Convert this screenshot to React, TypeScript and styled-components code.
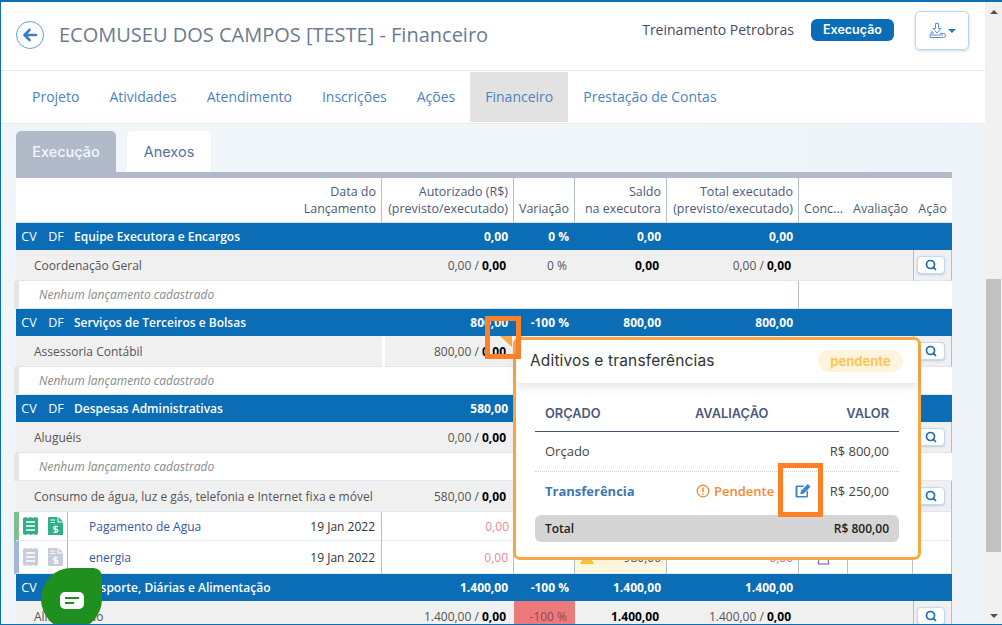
import React from "react";
import styled, { createGlobalStyle } from "styled-components";
import { Search } from "lucide-react";

const Global = createGlobalStyle`
  html, body { margin: 0; padding: 0; background: #fff; }
  body { font-family: "Open Sans", "Liberation Sans", sans-serif; overflow: hidden; }
  * { box-sizing: border-box; }
`;

const Window = styled.div`
  position: relative; width: 1002px; height: 625px; display: flex; overflow: hidden;
  border: 1px solid #0b6fb6; border-top-width: 2px; border-right-width: 0; background: #fff;
`;
const Page = styled.div`flex: 1; min-width: 0; display: flex; flex-direction: column;`;
const Header = styled.header`
  height: 69px; flex: none; display: flex; align-items: flex-start; border-bottom: 1px solid #e3edf3; padding-left: 15px;
`;
const BackButton = styled.div`
  width: 28px; height: 28px; margin-top: 19px; border: 1px solid #5fa2de; border-radius: 50%;
  display: flex; align-items: center; justify-content: center;
`;
const Title = styled.h1`
  margin: 18px 0 0 15px; font-size: 20px; line-height: 29px; font-weight: 400; color: #6c7b90; white-space: nowrap;
`;
const Spacer = styled.div`flex: 1;`;
const ProjectName = styled.span`
  margin-top: 18px; font-size: 14px; line-height: 20px; color: #474b68; white-space: nowrap;
`;
const StatusBadge = styled.span`
  margin: 17px 0 0 17px; width: 83px; height: 22px; border-radius: 6px; background: #0a6db5; color: #fff;
  font: 600 12.5px/22px Inter, "Open Sans", sans-serif; text-align: center;
`;
const ExportButton = styled.div`
  margin: 9px 16px 0 21px; width: 54px; height: 39px; border: 1px solid #b9d5ea; border-radius: 5px;
  box-shadow: 0 1px 3px rgba(90,130,170,.35); display: flex; align-items: center; justify-content: center; gap: 2px;
`;
const Caret = styled.span`
  width: 0; height: 0; border-left: 4px solid transparent; border-right: 4px solid transparent; border-top: 4px solid #2b7bc0; margin-top: 1px;
`;
const Nav = styled.nav`
  height: 53px; flex: none; display: flex; padding: 1px 0 0 16px; border-bottom: 1px solid #e6edf2;
`;
const NavItem = styled.a<{ $active?: boolean }>`
  padding: 0 15px; height: 50px; line-height: 50px; font-size: 14px; color: #4c82bf; white-space: nowrap;
  background: ${p => (p.$active ? "#e2e2e2" : "transparent")};
`;
const Content = styled.main`
  flex: 1; min-height: 0; overflow: hidden; padding: 7px 33px 0 15px; background: linear-gradient(90deg, #f0f5f9, #f1f6fa 60%, #edf3f8);
`;
const Tabs = styled.div`display: flex; gap: 11px; height: 41px;`;
const Tab = styled.div<{ $active?: boolean; $w: number }>`
  width: ${p => p.$w}px; border-radius: 5px 5px 0 0; text-align: center;
  font: ${p => (p.$active ? 500 : 400)} 14.5px/41px Inter, "Open Sans", sans-serif;
  background: ${p => (p.$active ? "#b0bac9" : "#fff")}; color: ${p => (p.$active ? "#f4f6f9" : "#56709f")};
`;
const TabBar = styled.div`height: 6px; background: #b0bac9;`;
const Table = styled.table`
  width: 936px; table-layout: fixed; border-collapse: separate; border-spacing: 0; font-size: 12px; background: #fff;
`;
const Th = styled.th<{ $line?: boolean }>`
  height: 45px; padding: 0 5px 5px 0; vertical-align: bottom; text-align: right; font-weight: 400; font-size: 12.5px; line-height: 17px;
  color: #4d5a78; white-space: nowrap; border-bottom: 1px solid #dfe4ea;
  border-right: ${p => (p.$line ? "1px solid #b5bdc9" : "0")};
`;
const ConcTh = styled(Th)`text-align: center; padding: 0 0 5px;`;
const GroupRow = styled.tr`
  height: 27px; background: #0a6db5; color: #fff; font-weight: 700;
`;
const GroupCell = styled.td`
  padding: 0 6px 0 0; text-align: right; white-space: nowrap; overflow: hidden;
`;
const GroupName = styled(GroupCell)`padding-left: 6px; text-align: left; font-weight: 600;`;
const CodeCell = styled.td<{ $nudge?: boolean }>`
  padding: 0 0 0 ${p => (p.$nudge ? "2px" : "0")}; text-align: center; font-weight: 400; font-size: 12.5px;
`;
const SubRow = styled.tr`height: 31px; background: #f0f0f0;`;
const SubCell = styled.td<{ $left?: boolean; $flag?: boolean; $danger?: boolean; $line?: boolean }>`
  position: relative; padding: ${p => (p.$left ? "0 0 0 18px" : "0 8px 0 0")}; text-align: ${p => (p.$left ? "left" : "right")};
  color: ${p => (p.$danger ? "#8f4b4b" : "#555")}; white-space: nowrap; border-bottom: 1px solid #dfe5ef;
  background: ${p => (p.$danger ? "#ec7a7a" : "transparent")};
  border-right: ${p => (p.$line ? "1px solid #b5bdc9" : "0")};
  border-left: ${p => (p.$flag ? "3px solid #fff" : "0")};
  ${p => p.$flag && `&::after { content: ""; position: absolute; top: 0; right: 2px; border-style: solid; border-width: 0 12px 11px 0; border-color: transparent #f9a742 transparent transparent; }`}
`;
const ActionCell = styled(SubCell)`padding: 0 0 0 3px; text-align: left; border-left: 1px solid #b5bdc9; border-right: 1px solid #b5bdc9;`;
const Strong = styled.b`color: #000; font-weight: 700;`;
const SearchButton = styled.span`
  width: 28px; height: 18px; background: #fff; border: 1px solid #bcdcf0; border-radius: 4px; box-shadow: 0 1px 2px rgba(80,120,170,.3);
  display: inline-flex; align-items: center; justify-content: center; color: #186cb2; vertical-align: middle;
`;
const EmptyRow = styled.tr`height: 28px;`;
const EmptyCell = styled.td`
  padding: 0 0 1px 23px; font-style: italic; color: #8a8a8a; white-space: nowrap; border-bottom: 1px solid #e4e8f0;
  box-shadow: -2px 0 0 #e5e5e5, inset 3px 0 0 #e5e5e5;
`;
const PlainCell = styled.td<{ $line?: boolean }>`
  padding: 0 5px; border-bottom: 1px solid #e4e8f0; text-align: right; white-space: nowrap;
  border-right: ${p => (p.$line ? "1px solid #b5bdc9" : "0")};
`;
const MarkCell = styled(PlainCell)`padding: 0; text-align: center; line-height: 0;`;
const DocRow = styled.tr<{ $h: number }>`height: ${p => p.$h}px;`;
const IconCell = styled.td<{ $stripe?: string; $line?: boolean }>`
  padding: 0 0 0 2px; text-align: center; line-height: 0; border-bottom: 1px solid #e4e8f0;
  border-right: ${p => (p.$line ? "1px solid #b5bdc9" : "0")};
  box-shadow: ${p => (p.$stripe ? `-2px 0 0 ${p.$stripe}, inset 3px 0 0 ${p.$stripe}` : "none")};
`;
const DocName = styled(PlainCell)`padding-left: 21px; text-align: left; color: #35589f;`;
const DocDate = styled(PlainCell)`padding-right: 6px; color: #333;`;
const PinkValue = styled(PlainCell)`color: #ee8a8f;`;
const YellowCell = styled(PlainCell)`background: #fdf6df; color: #555;`;
const YellowInner = styled.span`display: flex; align-items: center; justify-content: space-between;`;
const RedSmall = styled(PlainCell)`color: #e86a70;`;

const ScrollTrack = styled.aside`
  width: 17px; flex: none; background: #f1f1f1; display: flex; flex-direction: column; align-items: center; justify-content: space-between; padding: 8px 0 6px;
`;
const ArrowUp = styled.span`width:0;height:0;border-left:4px solid transparent;border-right:4px solid transparent;border-bottom:4px solid #505050;`;
const ArrowDown = styled.span`width:0;height:0;border-left:4px solid transparent;border-right:4px solid transparent;border-top:4px solid #505050;`;
const ScrollThumb = styled.span`
  position: absolute; top: 277px; right: 1px; width: 15px; height: 273px; background: #c1c1c1;
`;

const Popover = styled.section`
  position: absolute; left: 512px; top: 335px; width: 408px; height: 223px; background: #fff;
  border: 3px solid #f9a742; border-radius: 7px; font-size: 13px; color: #444;
`;
const PopHead = styled.div`
  height: 43px; display: flex; align-items: center; justify-content: space-between; padding: 0 15px 2px 14px;
  box-shadow: 0 4px 8px rgba(60,60,60,.13);
`;
const PopTitle = styled.h2`margin: 0; font: 400 15.5px/20px Inter, "Open Sans", sans-serif; letter-spacing: .15px; color: #333;`;
const PendingPill = styled.span`
  width: 85px; height: 22px; border-radius: 11px; background: #fdf4dd; color: #fcc659; text-align: center;
  font: 700 13px/22px Inter, "Open Sans", sans-serif;
`;
const PopBody = styled.div`padding: 18px 19px 0 19px;`;
const PopRowHead = styled.div`
  height: 31px; display: grid; grid-template-columns: 150px 1fr auto; align-items: start; border-bottom: 1px solid #3f5378;
  font: 600 12.8px/26px Inter, "Open Sans", sans-serif; color: #4c5a7b; padding: 0 10px;
`;
const PopRow = styled.div<{ $dotted?: boolean }>`
  height: 40px; display: grid; grid-template-columns: 151px 1fr auto; align-items: center; padding: 0 10px 2px;
  border-bottom: ${p => (p.$dotted ? "1px dotted #ccd" : "0")}; color: #444;
`;
const Transfer = styled.b`color: #3c78b4; font-weight: 700;`;
const Pending = styled.span`
  color: #f58a30; font-weight: 600; display: flex; align-items: center; gap: 4px;
`;
const EditSlot = styled.span`display: inline-flex; margin-left: 21px;`;
const Eval = styled.div`display: flex; align-items: center;`;
const TotalBar = styled.div`
  height: 27px; margin-top: 3px; background: #d5d5d5; border-radius: 6px; display: flex; align-items: center; justify-content: space-between;
  padding: 0 10px; font-size: 12px; color: #222; font-weight: 600;
`;
const Highlight = styled.div<{ $x: number; $y: number; $w: number; $h: number }>`
  position: absolute; left: ${p => p.$x}px; top: ${p => p.$y}px; width: ${p => p.$w}px; height: ${p => p.$h}px;
  border: 5px solid #fd7f26; pointer-events: none;
`;
const ChatBubble = styled.div`
  position: absolute; left: 40px; top: 566px; width: 61px; height: 62px; background: #1f8f1f;
  border-radius: 50% 14% 50% 50%; display: flex; align-items: center; justify-content: center; padding-top: 3px;
`;

const Arrow = () => (
  <svg width="16" height="14" viewBox="0 0 16 14" fill="none" stroke="#3a7fc4" strokeWidth="2.6" strokeLinecap="round" strokeLinejoin="round">
    <path d="M14 7H3M7.5 2 2.5 7l5 5" />
  </svg>
);
const ExportIcon = () => (
  <svg width="17" height="17" viewBox="0 0 17 17" fill="none" stroke="#5b93cc" strokeWidth="1" strokeLinejoin="round">
    <path d="M6.5 1.5h3v5h2.5L8 11 4 6.5h2.5z" />
    <path d="M3.5 9 1 13v2.500h13.500a1.500 1.500 0 0 0 0-4H11M5 11H3" />
    <path d="M1 13h13" />
  </svg>
);
const Receipt = ({ color }: { color: string }) => (
  <svg width="15" height="18" viewBox="0 0 15 18">
    <path d="M0 1l2.500-1 2.500 1 2.500-1 2.500 1 2.500-1L15 1v16l-2.500 1-2.500-1-2.500 1-2.500-1-2.500 1L0 17z" fill={color} />
    <path d="M3 5h9M3 9h9M3 13h9" stroke="#fff" strokeWidth="1.500" />
  </svg>
);
const FileDollar = ({ color }: { color: string }) => (
  <svg width="15" height="18" viewBox="0 0 15 18">
    <path d="M0 0h9.500v5.500H15V18H0z" fill={color} />
    <path d="M10.500 0 15 4.500h-4.500z" fill={color} />
    <path d="M2.500 3h4.500M2.500 5.500h4.500" stroke="#fff" strokeWidth="1" />
    <path d="M10 9.500H7a1.200 1.200 0 0 0 0 2.800h1.500a1.200 1.200 0 0 1 0 2.800H5.500M7.700 8.500v7.500" stroke="#fff" strokeWidth="1.200" fill="none" />
  </svg>
);
const Warn = () => (
  <svg width="14" height="14" viewBox="0 0 14 14" fill="none" stroke="#f58a30" strokeWidth="1.300">
    <circle cx="7" cy="7" r="5.800" />
    <path d="M7 3.500v4.500M7 9.500v1.300" strokeWidth="1.600" />
  </svg>
);
const Edit = () => (
  <svg width="16" height="14" viewBox="0 0 16 14">
    <path d="M1.800 1.500h7.700L8 3H2.500v9h9V7.500L13 6v6.200a1.300 1.300 0 0 1-1.300 1.300H1.800A1.300 1.300 0 0 1 .5 12.200V2.800a1.300 1.300 0 0 1 1.300-1.300z" fill="#3a85d0" />
    <path d="M12.800 0 15.500 2.700 8.500 9.700 5.300 10.300 5.900 7z" fill="#3a85d0" />
  </svg>
);
const ChatIcon = () => (
  <svg width="24" height="17" viewBox="0 0 24 17">
    <rect width="24" height="17" rx="5" fill="#fff" />
    <path d="M5 6h14M5 11h9" stroke="#1f8f1f" strokeWidth="2" />
  </svg>
);
const TriangleMark = () => (
  <svg width="15" height="15" viewBox="0 0 15 15" fill="none" stroke="#5a5ea0" strokeWidth="1"><path d="M5 1h5l3 13H2z" /></svg>
);
const YellowWarn = () => (
  <svg width="14" height="13" viewBox="0 0 14 13"><path d="M7 0l7 13H0z" fill="#f2c23a" /></svg>
);

const Pair = ({ a, b }: { a: string; b: string }) => <>{a} / <Strong>{b}</Strong></>;
const SearchBtn = () => <SearchButton><Search size={12} strokeWidth={3.4} /></SearchButton>;

const Group = ({ name, auth, vari, saldo, total }: { name: string; auth: string; vari?: string; saldo?: string; total?: string }) => (
  <GroupRow>
    <CodeCell>CV</CodeCell>
    <CodeCell $nudge>DF</CodeCell>
    <GroupName colSpan={2}>{name}</GroupName>
    <GroupCell>{auth}</GroupCell>
    <GroupCell>{vari}</GroupCell>
    <GroupCell>{saldo}</GroupCell>
    <GroupCell>{total}</GroupCell>
    <GroupCell colSpan={3} />
  </GroupRow>
);
const Sub = ({ name, a, b, vari, saldo, flag, danger }: { name: string; a: string; b: string; vari?: string; saldo?: string; flag?: boolean; danger?: boolean }) => (
  <SubRow>
    <SubCell $left colSpan={4}>{name}</SubCell>
    <SubCell $flag={flag}><Pair a={a} b={b} /></SubCell>
    <SubCell $danger={danger}>{vari}</SubCell>
    <SubCell>{saldo && <Strong>{saldo}</Strong>}</SubCell>
    <SubCell>{saldo && <Pair a={a} b={b} />}</SubCell>
    <SubCell colSpan={2} />
    <ActionCell><SearchBtn /></ActionCell>
  </SubRow>
);
const Empty = () => (
  <EmptyRow>
    <EmptyCell colSpan={7}>Nenhum lançamento cadastrado</EmptyCell>
    <PlainCell $line />
    <PlainCell />
    <PlainCell />
    <PlainCell />
  </EmptyRow>
);

export default function App() {
  return (
    <>
      <Global />
      <Window>
        <Page>
          <Header>
            <BackButton><Arrow /></BackButton>
            <Title>ECOMUSEU DOS CAMPOS [TESTE] - Financeiro</Title>
            <Spacer />
            <ProjectName>Treinamento Petrobras</ProjectName>
            <StatusBadge>Execução</StatusBadge>
            <ExportButton><ExportIcon /><Caret /></ExportButton>
          </Header>
          <Nav>
            <NavItem>Projeto</NavItem>
            <NavItem>Atividades</NavItem>
            <NavItem>Atendimento</NavItem>
            <NavItem>Inscrições</NavItem>
            <NavItem>Ações</NavItem>
            <NavItem $active>Financeiro</NavItem>
            <NavItem>Prestação de Contas</NavItem>
          </Nav>
          <Content>
            <Tabs>
              <Tab $active $w={100}>Execução</Tab>
              <Tab $w={84}>Anexos</Tab>
            </Tabs>
            <TabBar />
            <Table>
              <colgroup>
                <col width={26} /><col width={26} /><col width={213} /><col width={101} />
                <col width={132} /><col width={61} /><col width={92} /><col width={132} />
                <col width={49} /><col width={65} /><col width={39} />
              </colgroup>
              <thead>
                <tr>
                  <Th colSpan={4} $line>Data do<br />Lançamento</Th>
                  <Th $line>Autorizado (R$)<br />(previsto/executado)</Th>
                  <Th $line>Variação</Th>
                  <Th $line>Saldo<br />na executora</Th>
                  <Th $line>Total executado<br />(previsto/executado)</Th>
                  <ConcTh>Conc...</ConcTh>
                  <ConcTh>Avaliação</ConcTh>
                  <ConcTh>Ação</ConcTh>
                </tr>
              </thead>
              <tbody>
                <Group name="Equipe Executora e Encargos" auth="0,00" vari="0 %" saldo="0,00" total="0,00" />
                <Sub name="Coordenação Geral" a="0,00" b="0,00" vari="0 %" saldo="0,00" />
                <Empty />
                <Group name="Serviços de Terceiros e Bolsas" auth="800,00" vari="-100 %" saldo="800,00" total="800,00" />
                <Sub name="Assessoria Contábil" a="800,00" b="0,00" flag />
                <Empty />
                <Group name="Despesas Administrativas" auth="580,00" />
                <Sub name="Aluguéis" a="0,00" b="0,00" />
                <Empty />
                <Sub name="Consumo de água, luz e gás, telefonia e Internet fixa e móvel" a="580,00" b="0,00" />
                <DocRow $h={29}>
                  <IconCell $stripe="#7cc08f"><Receipt color="#2fb087" /></IconCell>
                  <IconCell $line><FileDollar color="#2fb087" /></IconCell>
                  <DocName>Pagamento de Agua</DocName>
                  <DocDate $line>19 Jan 2022</DocDate>
                  <PinkValue>0,00</PinkValue>
                  <PlainCell /><PlainCell /><PlainCell /><PlainCell /><PlainCell /><PlainCell $line />
                </DocRow>
                <DocRow $h={33}>
                  <IconCell $stripe="#a0b8dc"><Receipt color="#c7ced9" /></IconCell>
                  <IconCell $line><FileDollar color="#c7ced9" /></IconCell>
                  <DocName>energia</DocName>
                  <DocDate $line>19 Jan 2022</DocDate>
                  <PinkValue $line>0,00</PinkValue>
                  <PlainCell $line />
                  <YellowCell $line><YellowInner><YellowWarn />980,00</YellowInner></YellowCell>
                  <RedSmall $line>0,00</RedSmall>
                  <MarkCell $line><TriangleMark /></MarkCell>
                  <PlainCell $line />
                  <PlainCell $line />
                </DocRow>
                <Group name="Transporte, Diárias e Alimentação" auth="1.400,00" vari="-100 %" saldo="1.400,00" total="1.400,00" />
                <Sub name="Alimentação" a="1.400,00" b="0,00" vari="-100 %" saldo="1.400,00" danger />
              </tbody>
            </Table>
          </Content>
        </Page>
        <ScrollTrack><ArrowUp /><ArrowDown /></ScrollTrack>
        <ScrollThumb />
        <Popover>
          <PopHead>
            <PopTitle>Aditivos e transferências</PopTitle>
            <PendingPill>pendente</PendingPill>
          </PopHead>
          <PopBody>
            <PopRowHead><span>ORÇADO</span><span>AVALIAÇÃO</span><span>VALOR</span></PopRowHead>
            <PopRow $dotted><span>Orçado</span><span /><span>R$ 800,00</span></PopRow>
            <PopRow>
              <Transfer>Transferência</Transfer>
              <Eval><Pending><Warn />Pendente</Pending><EditSlot><Edit /></EditSlot></Eval>
              <span>R$ 250,00</span>
            </PopRow>
            <TotalBar><span>Total</span><span>R$ 800,00</span></TotalBar>
          </PopBody>
        </Popover>
        <Highlight $x={484} $y={314} $w={36} $h={43} />
        <Highlight $x={777} $y={461} $w={45} $h={54} />
        <ChatBubble><ChatIcon /></ChatBubble>
      </Window>
    </>
  );
}
